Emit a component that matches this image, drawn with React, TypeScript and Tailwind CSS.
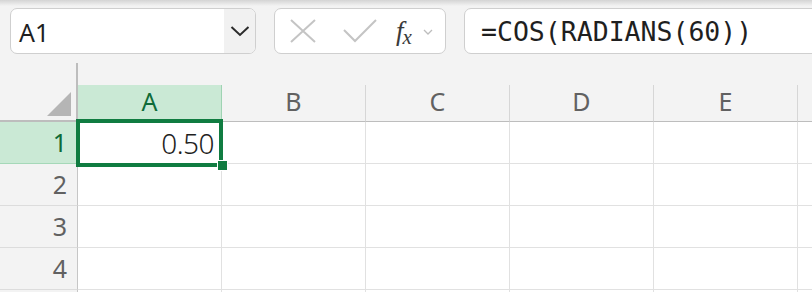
import { FC } from 'react';

const COLS = ['A', 'B', 'C', 'D', 'E', 'F'];
const ROWS = [1, 2, 3, 4, 5];

const uiFont = { fontFamily: '"Noto Sans", "Open Sans", sans-serif' };

const NameBox: FC = () => (
  <div className="w-[246px] h-[46px] shrink-0 flex bg-white border-[1.5px] border-[#cfcfcf] rounded-[7px] overflow-hidden">
    <div className="flex-1 flex items-center pl-[8px] pt-[3px] text-[25px] text-[#1f1f1f]" style={uiFont}>
      A1
    </div>
    <div className="w-[31px] bg-[#f1f1f1] flex items-center justify-center">
      <svg width="20" height="12" viewBox="0 0 20 12" fill="none">
        <path d="M1.5 2 L10 10 L18.5 2" stroke="#2b2b2b" strokeWidth="2" />
      </svg>
    </div>
  </div>
);

const FxBox: FC = () => (
  <div className="w-[172px] h-[46px] shrink-0 flex items-center bg-white border-[1.5px] border-[#cfcfcf] rounded-[7px]">
    <svg className="ml-[15px]" width="26" height="24" viewBox="0 0 26 24" fill="none">
      <path d="M1 1 L25 23 M25 1 L1 23" stroke="#c4c4c4" strokeWidth="2" />
    </svg>
    <svg className="ml-[27px]" width="34" height="24" viewBox="0 0 34 24" fill="none">
      <path d="M1 11 L12 22 L33 1" stroke="#c4c4c4" strokeWidth="2" />
    </svg>
    <div className="ml-[19px] flex items-end leading-none text-[#3a3a3a]" style={{ fontFamily: '"Liberation Serif", serif' }}>
      <span className="italic text-[27px]">f</span>
      <span className="italic text-[21px] -ml-[1px] mb-[-3px]">x</span>
    </div>
    <svg className="ml-[11px] mt-[2px]" width="10" height="6" viewBox="0 0 10 6" fill="none">
      <path d="M1 1 L5 5 L9 1" stroke="#bdbdbd" strokeWidth="1.3" />
    </svg>
  </div>
);

const FormulaBox: FC = () => (
  <div
    className="w-[420px] h-[46px] shrink-0 flex items-center bg-white border-[1.5px] border-[#cfcfcf] rounded-[7px] pl-[16px] pt-[1px] text-[26.5px] text-[#1f1f1f]"
    style={{ fontFamily: '"DejaVu Sans Mono", "Liberation Mono", monospace' }}
  >
    =COS(RADIANS(60))
  </div>
);

export default function App() {
  return (
    <div className="relative w-[812px] h-[292px] overflow-hidden bg-[#f3f3f3]" style={uiFont}>
      {/* ribbon shadow */}
      <div className="absolute top-0 inset-x-0 h-[6px] bg-gradient-to-b from-[#d4d4d4] to-transparent" />

      {/* formula bar */}
      <div className="flex gap-[18px] pt-[8px] pl-[10px] h-[54px]">
        <NameBox />
        <FxBox />
        <FormulaBox />
      </div>

      {/* sheet */}
      <div className="relative mt-[9px]">
        {/* column headers */}
        <div className="flex items-end h-[59px]">
          <div className="relative w-[78px] h-[59px] shrink-0 border-r-2 border-b-2 border-[#bdbdbd]">
            <div className="absolute right-[5px] bottom-[4px] w-[24px] h-[24px] bg-[#b5b5b5] [clip-path:polygon(100%_0,100%_100%,0_100%)]" />
          </div>
          {COLS.map((c) => (
            <div
              key={c}
              className={`w-[144px] h-[37px] shrink-0 flex items-center justify-center border-b border-[#bdbdbd] text-[25px] pb-[2px] ${
                c === 'A'
                  ? 'bg-[#cae9d5] text-[#0e6b38] border-r border-r-[#9fd3b3]'
                  : 'text-[#616161] border-r border-r-[#d6d6d6]'
              }`}
            >
              {c !== 'F' && c}
            </div>
          ))}
        </div>

        {/* rows */}
        {ROWS.map((r) => (
          <div key={r} className="flex h-[42px]">
            <div
              className={`w-[78px] shrink-0 flex items-center justify-end pr-[10px] text-[25px] border-r border-r-[#c6c6c6] border-b ${
                r === 1 ? 'bg-[#cae9d5] text-[#0e6b38] border-b-[#a5d8b8]' : 'text-[#616161] border-b-[#dcdcdc]'
              }`}
            >
              {r < 5 && r}
            </div>
            {COLS.map((c) => (
              <div
                key={c}
                className="w-[144px] shrink-0 flex items-center justify-end pr-[7px] bg-white border-r border-b border-[#e1e1e1] text-[28px] font-light tracking-[-0.5px] text-[#1f1f1f]"
              >
                {r === 1 && c === 'A' ? '0.50' : ''}
              </div>
            ))}
          </div>
        ))}

        {/* active cell */}
        <div className="absolute left-[76px] top-[56px] w-[147px] h-[48px] border-[4px] border-[#107c41]" />
        <div className="absolute left-[217px] top-[97px] w-[11px] h-[11px] bg-[#107c41] border border-white" />
      </div>
    </div>
  );
}
